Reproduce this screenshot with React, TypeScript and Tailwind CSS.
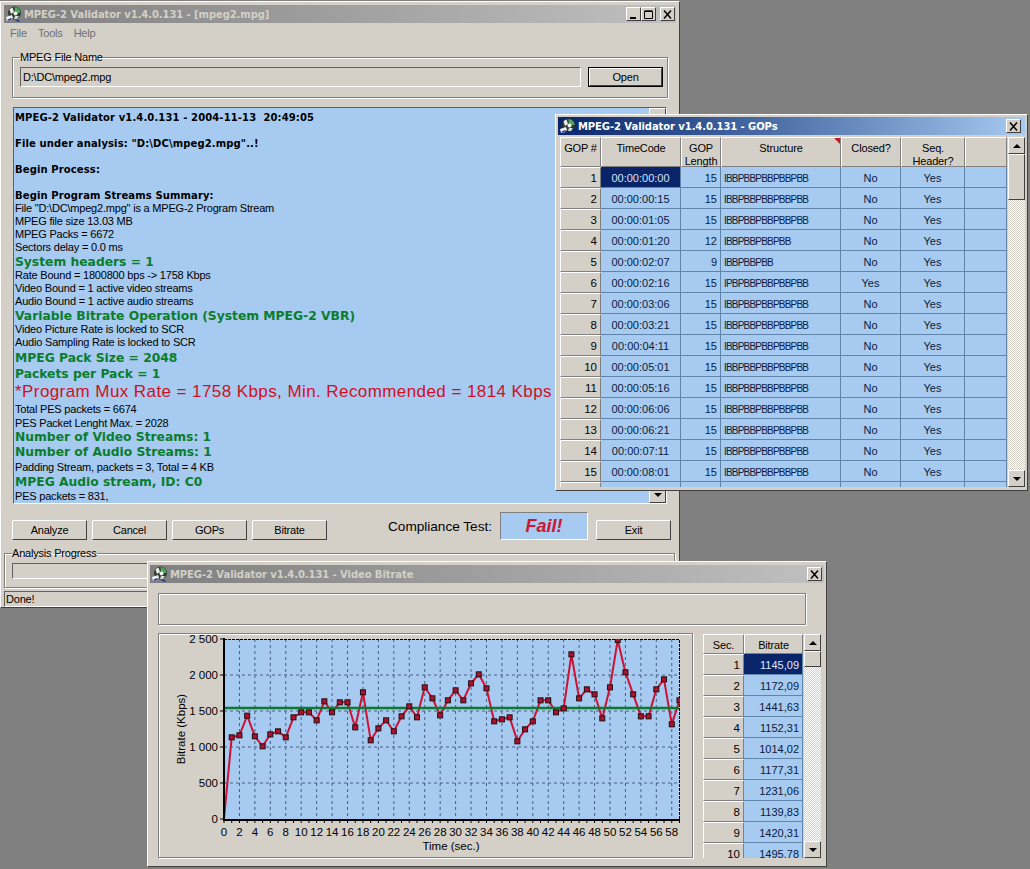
import type { ReactNode } from "react";

const raised = "border border-t-white border-l-white border-r-[#404040] border-b-[#404040] bg-[#d4d0c8]";
const sunken = "border border-t-[#606060] border-l-[#606060] border-r-white border-b-white";
const etched = "border border-[#808080] shadow-[1px_1px_0_#ffffff,inset_1px_1px_0_#ffffff]";
const uiText = "text-[11px] tracking-[-0.2px]";
const titleFont = "font-['DejaVu_Sans',sans-serif] font-bold text-[10px] tracking-[-0.08px]";

function AppIcon() {
  return (
    <svg viewBox="0 0 16 16" className="w-4 h-4 shrink-0 mr-[2px]">
      <circle cx="8.5" cy="7" r="6.5" fill="#303830" />
      <path d="M8.5 1a6 6 0 0 1 6 6H9z" fill="#4fa85a" />
      <path d="M3.5 3.5a6 6 0 0 1 3-2L8 6 5 8z" fill="#e8ece8" />
      <circle cx="9.5" cy="7.5" r="2" fill="#f4f8f4" />
      <path d="M9 10h4l-2 3H8z" fill="#cfe0d0" />
      <path d="M0 11l6-2 1 3-3 3H1z" fill="#f0f0f0" />
      <path d="M1 14l4-2 1 1-3 2zM10 13l4 2-1 1-4-2z" fill="#1030a0" />
    </svg>
  );
}

function TitleBar({ title, active, pad, children }: { title: string; active?: boolean; pad: string; children: ReactNode }) {
  return (
    <div
      className={`h-[18px] flex items-center pl-[2px] ${pad} ${
        active
          ? "bg-gradient-to-r from-[#0a246a] to-[#a6caf0] text-white"
          : "bg-gradient-to-r from-[#808080] to-[#c0c0c0] text-[#d4d0c8]"
      }`}
    >
      <AppIcon />
      <span className={`flex-1 whitespace-pre ${titleFont}`}>{title}</span>
      {children}
    </div>
  );
}

function CaptionButton({ kind, className }: { kind: "min" | "max" | "close"; className?: string }) {
  return (
    <div className={`w-[15px] h-[14px] flex items-center justify-center ${raised} ${className ?? ""}`}>
      <svg viewBox="0 0 10 9" className="w-[10px] h-[9px]" fill="none" stroke="#000000">
        {kind === "min" && <path d="M1 8h6" strokeWidth="2" />}
        {kind === "max" && <path d="M0.5 1.5h8v7h-8zM0.5 0.8h8" />}
        {kind === "close" && <path d="M1 0.5l7 8M8 0.5l-7 8" strokeWidth="1.5" />}
      </svg>
    </div>
  );
}

function Arrow({ down }: { down?: boolean }) {
  return (
    <svg viewBox="0 0 8 4" className="w-2 h-1">
      <path d={down ? "M0 0h8L4 4z" : "M0 4h8L4 0z"} fill="#000000" />
    </svg>
  );
}

function Scrollbar({ thumb, className }: { thumb: string; className: string }) {
  return (
    <div className={`flex flex-col w-[17px] shrink-0 bg-[repeating-conic-gradient(#d4d0c8_0_25%,#ffffff_0_50%)] bg-[length:2px_2px] ${className}`}>
      <div className={`h-[17px] flex items-center justify-center ${raised}`}><Arrow /></div>
      <div className={`${thumb} ${raised}`} />
      <div className="flex-1" />
      <div className={`h-[17px] flex items-center justify-center ${raised}`}><Arrow down /></div>
    </div>
  );
}

function Btn({ label, strong }: { label: string; strong?: boolean }) {
  return (
    <div
      className={`flex items-center justify-center text-black ${uiText} ${raised} ${
        strong ? "w-[73px] h-[18px] pt-[1px] outline outline-1 outline-black" : "w-[75px] h-[20px] pt-[1px]"
      }`}
    >
      {label}
    </div>
  );
}

type LogKind = "bold" | "plain" | "green" | "red";
const logLines: { t: string; k: LogKind; h: string }[] = [
  { t: "MPEG-2 Validator v1.4.0.131 - 2004-11-13  20:49:05", k: "bold", h: "h-[14px] mb-[12px]" },
  { t: 'File under analysis: "D:\\DC\\mpeg2.mpg"..!', k: "bold", h: "h-[14px] mb-[12px]" },
  { t: "Begin Process:", k: "bold", h: "h-[14px] mb-[12px]" },
  { t: "Begin Program Streams Summary:", k: "bold", h: "h-[14px]" },
  { t: 'File "D:\\DC\\mpeg2.mpg" is a MPEG-2 Program Stream', k: "plain", h: "h-[13px]" },
  { t: "MPEG file size 13.03 MB", k: "plain", h: "h-[13px]" },
  { t: "MPEG Packs = 6672", k: "plain", h: "h-[13px]" },
  { t: "Sectors delay = 0.0 ms", k: "plain", h: "h-[13px]" },
  { t: "System headers = 1", k: "green", h: "h-[15px]" },
  { t: "Rate Bound = 1800800 bps -> 1758 Kbps", k: "plain", h: "h-[13px]" },
  { t: "Video Bound = 1 active video streams", k: "plain", h: "h-[13px]" },
  { t: "Audio Bound = 1 active audio streams", k: "plain", h: "h-[13px]" },
  { t: "Variable Bitrate Operation (System MPEG-2 VBR)", k: "green", h: "h-[15px]" },
  { t: "Video Picture Rate is locked to SCR", k: "plain", h: "h-[13px]" },
  { t: "Audio Sampling Rate is locked to SCR", k: "plain", h: "h-[13px]" },
  { t: "MPEG Pack Size = 2048", k: "green", h: "h-[17px]" },
  { t: "Packets per Pack = 1", k: "green", h: "h-[15px]" },
  { t: "*Program Mux Rate = 1758 Kbps, Min. Recommended = 1814 Kbps", k: "red", h: "h-[21px]" },
  { t: "Total PES packets = 6674", k: "plain", h: "h-[15px]" },
  { t: "PES Packet Lenght Max. = 2028", k: "plain", h: "h-[13px]" },
  { t: "Number of Video Streams: 1", k: "green", h: "h-[13px]" },
  { t: "Number of Audio Streams: 1", k: "green", h: "h-[17px]" },
  { t: "Padding Stream, packets = 3, Total = 4 KB", k: "plain", h: "h-[14px]" },
  { t: "MPEG Audio stream, ID: C0", k: "green", h: "h-[15px]" },
  { t: "PES packets = 831,", k: "plain", h: "h-[14px]" },
];

const logStyle: Record<LogKind, string> = {
  bold: "pt-[1px] font-['DejaVu_Sans',sans-serif] font-bold text-[10px] tracking-[0.12px] text-black",
  plain: "text-[11px] tracking-[-0.2px] text-black",
  green: "pt-[2px] font-['DejaVu_Sans',sans-serif] font-bold text-[12.3px] text-[#0a7d2c]",
  red: "text-[17px] tracking-[0.42px] text-[#d0101f]",
};

function MainWindow() {
  return (
    <div className={`absolute left-0 top-[1px] w-[680px] h-[607px] pt-[3px] px-[3px] ${raised}`}>
      <TitleBar title="MPEG-2 Validator v1.4.0.131 - [mpeg2.mpg]" pad="pr-[1px]">
        <CaptionButton kind="min" />
        <CaptionButton kind="max" />
        <CaptionButton kind="close" className="ml-[4px]" />
      </TitleBar>
      <div className={`h-[20px] flex items-center gap-[11px] pl-[6px] pt-[1px] text-[#707070] ${uiText}`}>
        <span>File</span>
        <span>Tools</span>
        <span>Help</span>
      </div>
      <fieldset className={`ml-[8px] mt-[8px] w-[656px] pl-[7px] pr-[4px] pb-[10px] ${etched}`}>
        <legend className={`leading-[13px] text-black ${uiText}`}>MPEG File Name</legend>
        <div className="flex items-center gap-[8px] mt-[3px]">
          <div className={`w-[561px] h-[20px] flex items-center pl-[2px] pt-[1px] ${uiText} ${sunken}`}>D:\DC\mpeg2.mpg</div>
          <Btn label="Open" strong />
        </div>
      </fieldset>
      <div className={`ml-[9px] mt-[9px] w-[654px] h-[397px] bg-[#a6caf0] flex ${sunken}`}>
        <div className="flex-1 pt-[2px] pl-[1px] overflow-hidden">
          {logLines.map((l, i) => (
            <div key={i} className={`flex items-center whitespace-pre ${l.h} ${logStyle[l.k]}`}>
              {l.t}
            </div>
          ))}
        </div>
        <Scrollbar thumb="h-[40px]" className="h-full" />
      </div>
      <div className="flex h-[28px] mt-[8px] ml-[8px] items-end">
        <div className="flex gap-[5px]">
          <Btn label="Analyze" />
          <Btn label="Cancel" />
          <Btn label="GOPs" />
          <Btn label="Bitrate" />
        </div>
        <div className="ml-[61px] w-[112px] h-[28px] pt-[7px] text-[13.6px] leading-[16px] text-black">Compliance Test:</div>
        <div className="w-[88px] h-[28px] flex items-center justify-center bg-[#a6caf0] border border-t-[#808080] border-l-[#808080] border-r-white border-b-white font-bold italic text-[18px] text-[#cf1530]">
          Fail!
        </div>
        <div className="ml-[8px]">
          <Btn label="Exit" />
        </div>
      </div>
      <fieldset className={`mt-[7px] w-[671px] pl-[7px] pb-[8px] ${etched}`}>
        <legend className={`leading-[13px] text-black ${uiText}`}>Analysis Progress</legend>
        <div className={`mt-[3px] h-[16px] w-[652px] ${sunken}`} />
      </fieldset>
      <div className={`mt-[3px] h-[16px] flex items-center pl-[1px] text-black ${uiText} ${sunken}`}>Done!</div>
    </div>
  );
}

const full = "IBBPBBPBBPBBPBB";
const gops: [number, string, number, string, string][] = [
  [1, "00:00:00:00", 15, full, "No"],
  [2, "00:00:00:15", 15, full, "No"],
  [3, "00:00:01:05", 15, full, "No"],
  [4, "00:00:01:20", 12, "IBBPBBPBBPBB", "No"],
  [5, "00:00:02:07", 9, "IBBPBBPBB", "No"],
  [6, "00:00:02:16", 15, "IPBPBBPBBPBBPBB", "Yes"],
  [7, "00:00:03:06", 15, full, "No"],
  [8, "00:00:03:21", 15, full, "No"],
  [9, "00:00:04:11", 15, full, "No"],
  [10, "00:00:05:01", 15, full, "No"],
  [11, "00:00:05:16", 15, full, "No"],
  [12, "00:00:06:06", 15, full, "No"],
  [13, "00:00:06:21", 15, full, "No"],
  [14, "00:00:07:11", 15, full, "No"],
  [15, "00:00:08:01", 15, full, "No"],
];

const headCell = "border border-t-white border-l-white border-r-[#808080] border-b-[#808080] bg-[#d4d0c8] text-[11px] tracking-[-0.15px] leading-[13px] text-black flex items-start justify-center text-center pt-[4px]";
const rowHead = "border border-t-white border-l-white border-r-[#808080] border-b-[#808080] bg-[#d4d0c8] text-[11.5px] text-black flex items-center justify-end pr-[3px] pt-[2px]";
const cell = "border-r border-b border-[#5f85ab] text-[11px] text-[#0a1a40] flex items-center pt-[2px]";

function GopsWindow() {
  return (
    <div className={`absolute left-[555px] top-[114px] w-[473px] h-[377px] pt-[2px] px-[2px] ${raised}`}>
      <TitleBar title="MPEG-2 Validator v1.4.0.131 - GOPs" active pad="pr-[4px]">
        <CaptionButton kind="close" />
      </TitleBar>
      <div className="flex mt-[2px] ml-[2px]">
        <div className="w-[448px] h-[350px] overflow-hidden">
          <div className="flex h-[30px]">
            <div className={`w-[41px] ${headCell}`}>GOP #</div>
            <div className={`w-[80px] ${headCell}`}>TimeCode</div>
            <div className={`w-[40px] ${headCell}`}>GOP<br />Length</div>
            <div className={`relative w-[120px] ${headCell}`}>
              Structure
              <span className="absolute top-0 right-0 w-0 h-0 border-t-[6px] border-l-[6px] border-t-[#d0101f] border-l-transparent" />
            </div>
            <div className={`w-[60px] ${headCell}`}>Closed?</div>
            <div className={`w-[64px] ${headCell}`}>Seq.<br />Header?</div>
            <div className={`flex-1 ${headCell}`} />
          </div>
          {gops.concat([[16, "", 15, "", ""]]).map(([n, tc, len, st, cl], i) => (
            <div key={n} className="flex h-[21px] bg-[#a6caf0]">
              <div className={`w-[41px] ${rowHead}`}>{n < 16 ? n : ""}</div>
              <div className={`w-[80px] justify-center ${cell} ${i === 0 ? "bg-[#0a246a] text-[#d8e4f4]" : ""}`}>{tc}</div>
              <div className={`w-[40px] justify-end pr-[3px] ${cell}`}>{n < 16 ? len : ""}</div>
              <div className={`w-[120px] pl-[3px] whitespace-pre ${cell}`}>
                <span className="text-[10px] tracking-[-0.8px]">{st}</span>
              </div>
              <div className={`w-[60px] justify-center ${cell}`}>{cl}</div>
              <div className={`w-[64px] justify-center ${cell}`}>{n < 16 ? "Yes" : ""}</div>
              <div className={`flex-1 ${cell}`} />
            </div>
          ))}
        </div>
        <Scrollbar thumb="h-[46px]" className="h-[350px] ml-[1px]" />
      </div>
    </div>
  );
}

// plot pixels read off the reference, one per second
const zoomYs = [
  1000, 352, 346, 287, 349, 379, 343, 334, 352, 292, 277, 277, 301, 244, 277, 247, 247, 322, 217, 361, 325, 301, 334,
  289, 259, 292, 202, 235, 286, 241, 211, 241, 190, 163, 205, 304, 298, 292, 364, 328, 304, 241, 241, 277, 265, 103,
  235, 208, 223, 295, 202, 60, 157, 223, 289, 289, 208, 178, 313, 241,
];
const pts = zoomYs.map((z, i) => ({ x: 224 + i * 7.72, y: i === 0 ? 819 : 620 + z / 3 }));
const polyline = pts.map((p) => `${p.x.toFixed(1)},${p.y.toFixed(1)}`).join(" ");
const yTicks = [0, 500, 1000, 1500, 2000, 2500];
const seconds = Array.from({ length: 60 }, (_, i) => i);

function Chart() {
  return (
    <svg viewBox="159 634 533 223" className="w-[533px] h-[223px]" fontFamily="'Liberation Sans', sans-serif" fontSize="11.5" fill="#000000">
      <defs>
        <clipPath id="plot">
          <rect x="223" y="639" width="457" height="181" />
        </clipPath>
      </defs>
      <rect x="224" y="639" width="455" height="180" fill="#a6caf0" />
      {seconds.filter((s) => s % 2 === 0 && s > 0).map((s) => (
        <line key={s} x1={224 + s * 7.72} x2={224 + s * 7.72} y1="639" y2="819" stroke="#4a5f80" strokeDasharray="3 3" />
      ))}
      {yTicks.slice(1, 5).map((v) => (
        <line key={v} x1="224" x2="679" y1={819 - v * 0.072} y2={819 - v * 0.072} stroke="#4a5f80" strokeDasharray="3 3" />
      ))}
      <path d="M224 639.5H679.5V819" fill="none" stroke="#000000" strokeDasharray="3 1" />
      <g clipPath="url(#plot)">
        <polyline points={polyline} fill="none" stroke="#cc1133" strokeWidth="2" />
        <line x1="224" x2="679" y1="708" y2="708" stroke="#0c7a2c" strokeWidth="2.5" />
        {pts.slice(1).map((p, i) => (
          <rect key={i} x={p.x - 2.5} y={p.y - 2.5} width="5" height="5" fill="#b01030" stroke="#201010" />
        ))}
      </g>
      <path d="M224 638V820H680" fill="none" stroke="#000000" strokeWidth="2" />
      {seconds.map((s) => (
        <line key={s} x1={224 + s * 7.72} x2={224 + s * 7.72} y1="820" y2="823" stroke="#000000" />
      ))}
      {yTicks.map((v) => (
        <g key={v}>
          <line x1="220" x2="224" y1={819 - v * 0.072} y2={819 - v * 0.072} stroke="#000000" />
          <text x="218" y={823 - v * 0.072} textAnchor="end">
            {v >= 1000 ? `${Math.floor(v / 1000)} ${String(v % 1000).padStart(3, "0")}` : v}
          </text>
        </g>
      ))}
      {seconds.filter((s) => s % 2 === 0).map((s) => (
        <text key={s} x={224 + s * 7.72} y="836" textAnchor="middle">{s}</text>
      ))}
      <text x="451" y="850" textAnchor="middle">Time (sec.)</text>
      <text transform="translate(185 729) rotate(-90)" textAnchor="middle">Bitrate (Kbps)</text>
    </svg>
  );
}

const rates = ["1145,09", "1172,09", "1441,63", "1152,31", "1014,02", "1177,31", "1231,06", "1139,83", "1420,31", "1495,78"];

function BitrateWindow() {
  return (
    <div className={`absolute left-[147px] top-[561px] w-[680px] h-[306px] pt-[3px] px-[2px] ${raised}`}>
      <TitleBar title="MPEG-2 Validator v1.4.0.131 - Video Bitrate" pad="pr-[2px]">
        <CaptionButton kind="close" />
      </TitleBar>
      <div className={`ml-[8px] mt-[10px] w-[648px] h-[32px] ${etched}`} />
      <div className="flex ml-[8px] mt-[8px]">
        <div className={`w-[535px] h-[225px] ${etched}`}>
          <Chart />
        </div>
        <div className="flex ml-[10px] mt-[1px]">
          <div className="w-[100px] h-[224px] overflow-hidden">
            <div className="flex h-[20px]">
              <div className={`w-[41px] !items-center !pt-[2px] ${headCell}`}>Sec.</div>
              <div className={`flex-1 !items-center !pt-[2px] ${headCell}`}>Bitrate</div>
            </div>
            {rates.map((r, i) => (
              <div key={r} className="flex h-[21px] bg-[#a6caf0]">
                <div className={`w-[41px] ${rowHead}`}>{i + 1}</div>
                <div className={`flex-1 justify-end pr-[3px] text-[11.5px] ${cell} ${i === 0 ? "bg-[#0a246a] text-[#e0e8f4]" : ""}`}>{r}</div>
              </div>
            ))}
          </div>
          <Scrollbar thumb="h-[16px]" className="h-[224px] ml-[1px]" />
        </div>
      </div>
    </div>
  );
}

export default function App() {
  return (
    <div className="relative w-[1030px] h-[869px] overflow-hidden bg-[#808080] font-['Liberation_Sans',sans-serif]">
      <MainWindow />
      <GopsWindow />
      <BitrateWindow />
    </div>
  );
}
